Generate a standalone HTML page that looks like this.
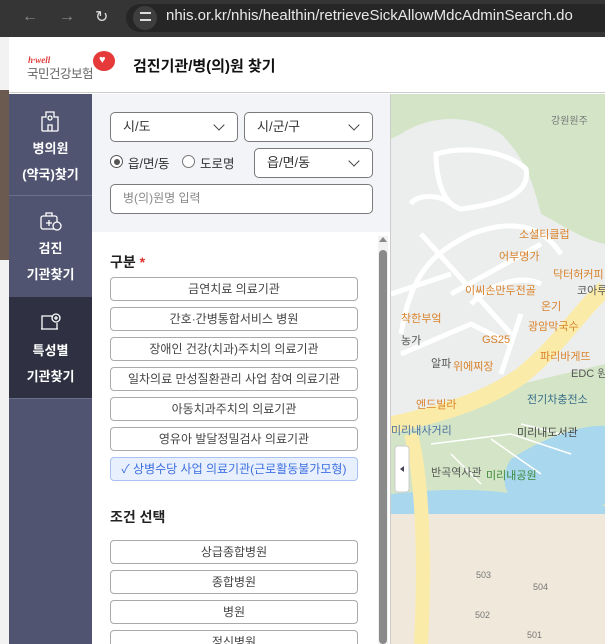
<!DOCTYPE html>
<html><head><meta charset="utf-8"><style>
*{box-sizing:border-box;margin:0;padding:0}
html,body{width:605px;height:644px;overflow:hidden}
body{position:relative;font-family:"Liberation Sans","Noto Sans CJK KR",sans-serif;background:#fff}
.abs{position:absolute}
.top{left:0;top:0;width:605px;height:37px;background:#353535}
.url{left:126px;top:4px;width:479px;height:28px;border-radius:14px 0 0 14px;background:#262626}
.sel{position:absolute;border:1px solid #7a7a7a;border-radius:5px;background:#fff;font-size:13px;color:#333;padding-left:12px;line-height:27px}
.sel.dd::after{content:"";position:absolute;right:14px;top:8px;width:7px;height:7px;border-right:1.3px solid #444;border-bottom:1.3px solid #444;transform:rotate(45deg)}
.btn{position:absolute;left:110px;width:248px;height:24px;border:1px solid #aaa;border-radius:4px;background:#fff;font-size:12px;color:#444;text-align:center;line-height:22px}
.side{position:absolute;left:9px;width:83px;color:#fff;font-size:13px;font-weight:bold;text-align:center;line-height:26px}
</style></head><body>
<div class="abs top"></div>
<div class="abs" style="left:22px;top:8px;color:#8a8a8a;font-size:16px">←</div>
<div class="abs" style="left:59px;top:8px;color:#8a8a8a;font-size:16px">→</div>
<div class="abs" style="left:95px;top:7px;color:#ddd;font-size:16px">↻</div>
<div class="abs url"></div>
<div class="abs" style="left:133px;top:6px;width:24px;height:24px;border-radius:12px;background:#3e3e3e"></div>
<div class="abs" style="left:140px;top:12px;width:11px;height:2px;background:#ddd"></div>
<div class="abs" style="left:140px;top:19px;width:11px;height:2px;background:#ddd"></div>
<div class="abs" style="left:166px;top:7px;color:#e8e8e8;font-size:15px;white-space:nowrap">nhis.or.kr/nhis/healthin/retrieveSickAllowMdcAdminSearch.do</div>
<div class="abs" style="left:0;top:37px;width:9px;height:607px;background:#f2f2f2"></div>
<div class="abs" style="left:0;top:90px;width:9px;height:170px;background:#6b5a50"></div>
<!-- header -->
<div class="abs" style="left:9px;top:37px;width:596px;height:56px;background:#fff;border-bottom:1px solid #ccc"></div>
<div class="abs" style="left:28px;top:55px;color:#e03a3a;font-size:9px;font-style:italic;font-weight:bold;font-family:'Liberation Serif',serif">h·well</div>
<div class="abs" style="left:27px;top:63px;color:#666;font-size:12.5px;letter-spacing:-0.5px">국민건강보험</div>
<div class="abs" style="left:93px;top:51px;width:22px;height:20px;border-radius:50%;background:#e63a3a"></div>
<div class="abs" style="left:99px;top:54px;color:#fff;font-size:11px">♥</div>
<div class="abs" style="left:133px;top:55px;color:#111;font-size:15px;font-weight:bold">검진기관/병(의)원 찾기</div>
<!-- sidebar -->
<div class="abs" style="left:9px;top:94px;width:83px;height:550px;background:#515470"></div>
<div class="abs" style="left:9px;top:195px;width:83px;height:1px;background:#6c6f88"></div>
<div class="abs" style="left:9px;top:297px;width:83px;height:102px;background:#2f3142;border-bottom:1px solid #6c6f88"></div>
<svg class="abs" style="left:40px;top:110px" width="20" height="22" viewBox="0 0 20 22" fill="none" stroke="#fff" stroke-width="1.3"><path d="M2 21V7h4V2h8v5h4v14M2 21h16M8 21v-6h4v6"/><circle cx="10" cy="8" r="2"/></svg>
<div class="side" style="top:136px">병의원<br>(약국)찾기</div>
<svg class="abs" style="left:40px;top:211px" width="22" height="20" viewBox="0 0 22 20" fill="none" stroke="#fff" stroke-width="1.3"><rect x="1" y="5" width="16" height="13" rx="2"/><path d="M6 5V2h6v3M9 9v6M6 12h6"/><circle cx="17" cy="15" r="4" fill="#515470"/></svg>
<div class="side" style="top:236px">검진<br>기관찾기</div>
<svg class="abs" style="left:40px;top:313px" width="22" height="20" viewBox="0 0 22 20" fill="none" stroke="#fff" stroke-width="1.3"><path d="M12 3H2v13h15V10M1 16h17"/><circle cx="16" cy="5" r="4"/><path d="M16 3v4M14 5h4"/></svg>
<div class="side" style="top:338px">특성별<br>기관찾기</div>
<!-- panel -->
<div class="abs" style="left:92px;top:94px;width:299px;height:138px;background:#f3f4f8"></div>
<div class="sel dd" style="left:110px;top:112px;width:128px;height:30px">시/도</div>
<div class="sel dd" style="left:244px;top:112px;width:129px;height:30px">시/군/구</div>
<div class="abs" style="left:110px;top:155px;width:13px;height:13px;border:1px solid #555;border-radius:50%;background:#fff"></div>
<div class="abs" style="left:113.5px;top:158.5px;width:6px;height:6px;border-radius:50%;background:#555"></div>
<div class="abs" style="left:128px;top:153px;font-size:12.5px;color:#333">읍/면/동</div>
<div class="abs" style="left:182px;top:155px;width:13px;height:13px;border:1px solid #777;border-radius:50%;background:#fff"></div>
<div class="abs" style="left:200px;top:153px;font-size:12.5px;color:#333">도로명</div>
<div class="sel dd" style="left:254px;top:148px;width:119px;height:30px">읍/면/동</div>
<div class="sel" style="left:110px;top:184px;width:263px;height:30px;color:#888;font-size:12px">병(의)원명 입력</div>
<!-- scrollbar -->
<div class="abs" style="left:378px;top:236px;width:10px;height:408px;background:#f1f1f1"></div>
<div class="abs" style="left:379px;top:250px;width:8px;height:394px;border-radius:4px;background:#8a8a8a"></div>
<div class="abs" style="left:379px;top:237px;width:0;height:0;border-left:4px solid transparent;border-right:4px solid transparent;border-bottom:5px solid #888"></div>
<div class="abs" style="left:110px;top:252px;font-size:14px;font-weight:bold;color:#222">구분 <span style="color:#e03030">*</span></div>
<div class="btn" style="top:277px">금연치료 의료기관</div>
<div class="btn" style="top:307px">간호·간병통합서비스 병원</div>
<div class="btn" style="top:337px">장애인 건강(치과)주치의 의료기관</div>
<div class="btn" style="top:367px">일차의료 만성질환관리 사업 참여 의료기관</div>
<div class="btn" style="top:397px">아동치과주치의 의료기관</div>
<div class="btn" style="top:427px">영유아 발달정밀검사 의료기관</div>
<div class="btn" style="top:457px;background:#e9f0fd;border-color:#a8c2f2;color:#3d6fe0">✓ 상병수당 사업 의료기관(근로활동불가모형)</div>
<div class="abs" style="left:110px;top:507px;font-size:14px;font-weight:bold;color:#222">조건 선택</div>
<div class="btn" style="top:540px">상급종합병원</div>
<div class="btn" style="top:570px">종합병원</div>
<div class="btn" style="top:600px">병원</div>
<div class="btn" style="top:630px">정신병원</div>
<!-- map -->
<svg class="abs" style="left:391px;top:94px" width="214" height="550" viewBox="0 0 214 550">
<rect width="214" height="550" fill="#eceeee"/>
<path d="M0 0H214V150C190 145 170 130 150 120 140 80 130 60 110 40 80 20 40 20 10 40L0 45Z" fill="#d3e5c6"/>
<path d="M0 330 60 315 130 290 214 270V420H0Z" fill="#d3e5c6"/>
<path d="M120 365C150 345 190 330 214 332V410C190 420 160 418 130 412 110 400 110 380 120 365Z" fill="#a9d7ee"/>
<path d="M0 400C40 396 70 394 110 398L214 412V420H0Z" fill="#a9d7ee"/>
<path d="M0 420H214V550H0Z" fill="#f0e8da"/>
<g stroke="#fff" stroke-width="5" fill="none">
<path d="M45 60C80 50 120 60 135 75 140 100 110 110 70 115 50 110 45 80 45 60Z"/>
<path d="M20 110C25 100 50 100 60 110 M10 240C20 180 40 160 80 140 120 125 150 130 170 160"/>
<path d="M30 140 120 240M60 200 150 150M0 200 60 180M10 260 80 230 120 250M110 280 130 220"/>
<path d="M80 210C100 190 130 180 150 190"/>
</g>
<path d="M-5 332C40 322 90 310 130 282 170 250 190 215 214 195" stroke="#fbeba8" stroke-width="17" fill="none"/>
<path d="M20 340C30 380 35 450 30 550" stroke="#fbeba8" stroke-width="14" fill="none"/>
<g stroke="#fff" stroke-width="1.5" fill="none"><path d="M40 350 120 340 180 360M60 360 90 390M100 345 150 380M130 330 170 340"/></g>
<g font-family="Liberation Sans,Noto Sans CJK KR,sans-serif" font-size="11">
<text x="128" y="144" fill="#d9822b">소셜티클럽</text>
<text x="108" y="166" fill="#d9822b">어부명가</text>
<text x="162" y="184" fill="#d9822b">닥터허커피</text>
<text x="74" y="200" fill="#d9822b">이씨손만두전골</text>
<text x="150" y="216" fill="#d9822b">온기</text>
<text x="10" y="228" fill="#d9822b">착한부엌</text>
<text x="137" y="236" fill="#d9822b">광암막국수</text>
<text x="91" y="249" fill="#d9822b">GS25</text>
<text x="10" y="250" fill="#555">농가</text>
<text x="149" y="266" fill="#d9822b">파리바게뜨</text>
<text x="40" y="273" fill="#555">알파</text>
<text x="62" y="276" fill="#d9822b">위에찌장</text>
<text x="25" y="314" fill="#d9822b">엔드빌라</text>
<text x="136" y="309" fill="#3a6e8a">전기차충전소</text>
<text x="0" y="340" fill="#4a6fa0">미리내사거리</text>
<text x="126" y="342" fill="#444">미리내도서관</text>
<text x="95" y="385" fill="#3a8a3a">미리내공원</text>
<text x="40" y="382" fill="#555">반곡역사관</text>
<text x="186" y="200" fill="#555">코아루</text>
<text x="180" y="283" fill="#555">EDC 원주</text>
<text x="160" y="30" fill="#777" font-size="10">강원원주</text>
<text x="85" y="484" fill="#777" font-size="9">503</text>
<text x="84" y="524" fill="#777" font-size="9">502</text>
<text x="136" y="544" fill="#777" font-size="9">501</text>
<text x="142" y="496" fill="#777" font-size="9">504</text>
</g>
<rect x="4" y="352" width="14" height="46" rx="3" fill="#fff" stroke="#ccc"/>
<path d="M9 375l4-3v6z" fill="#445"/>
</svg>
<div class="abs" style="left:390px;top:94px;width:1px;height:550px;background:#ccc"></div>
</body></html>
